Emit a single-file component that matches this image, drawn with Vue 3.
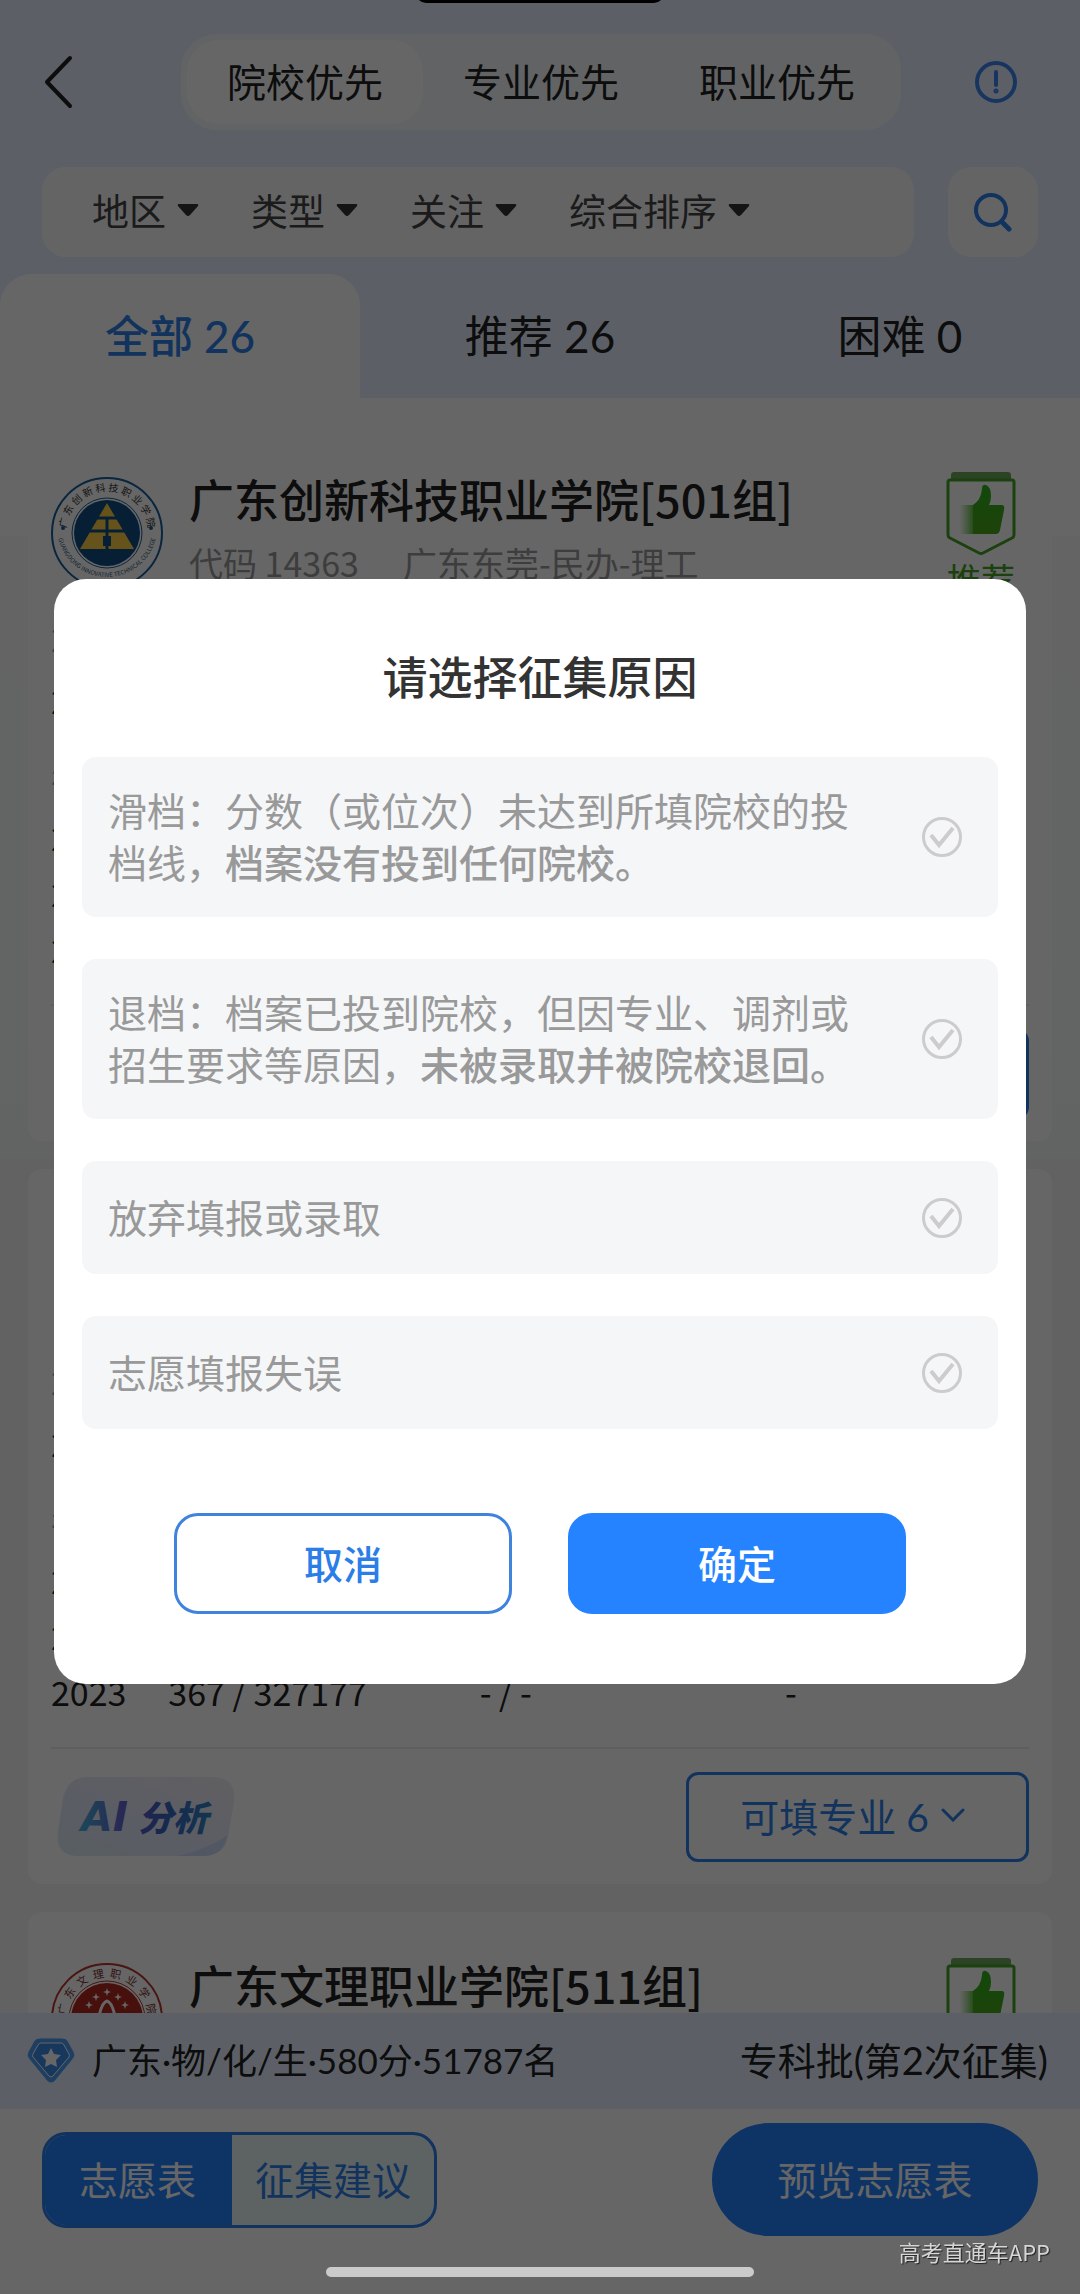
<template>
  <div class="page">
    <header class="top">
      <div class="nav">
        <button type="button" class="icon-btn" aria-label="返回">
          <svg width="32" height="56" viewBox="0 0 32 56" fill="none" stroke="#222" stroke-width="4" stroke-linecap="round" stroke-linejoin="round">
            <path d="M28 4 5 28l23 24" />
          </svg>
        </button>
        <div class="modes">
          <button
            v-for="mode in modes"
            :key="mode"
            type="button"
            class="mode"
            :class="{ active: mode === currentMode }"
            @click="currentMode = mode"
          >{{ mode }}</button>
        </div>
        <button type="button" class="icon-btn" aria-label="说明">
          <svg width="44" height="44" viewBox="0 0 44 44" fill="none" stroke="#3a86ee" stroke-width="4" stroke-linecap="round">
            <circle cx="22" cy="22" r="19" />
            <path d="M22 12v13" />
            <circle cx="22" cy="31" r="1" stroke-width="3" />
          </svg>
        </button>
      </div>

      <div class="filters">
        <div class="filter-box">
          <button v-for="f in filters" :key="f" type="button" class="filter">
            {{ f }}
            <svg width="22" height="12" viewBox="0 0 22 12" fill="#333">
              <path d="M2 0h18q2 0 1 2l-8 9q-2 2-4 0L1 2Q0 0 2 0z" />
            </svg>
          </button>
        </div>
        <button type="button" class="search" aria-label="搜索">
          <svg width="40" height="40" viewBox="0 0 40 40" fill="none" stroke="#2e7fe8" stroke-width="4" stroke-linecap="round">
            <circle cx="18" cy="18" r="15" />
            <path d="m29 30 7 7" stroke-width="5" />
          </svg>
        </button>
      </div>

      <nav class="tabs">
        <button
          v-for="tab in tabs"
          :key="tab.name"
          type="button"
          class="tab"
          :class="{ active: tab.name === currentTab }"
          @click="currentTab = tab.name"
        >{{ tab.name }} {{ tab.count }}</button>
      </nav>
    </header>

    <main class="list">
      <article v-for="school in schools" :key="school.name" class="card">
        <div class="card-head">
          <svg v-if="school.logo === 'blue'" class="logo" viewBox="0 0 112 112">
            <defs>
              <path id="blue-top" d="M17 68A41 41 0 1 1 95 68" />
              <path id="blue-bottom" d="M6 50A50 50 0 1 0 106 50" />
            </defs>
            <circle cx="56" cy="56" r="55" fill="#fff" stroke="#195f9b" stroke-width="2" />
            <circle cx="56" cy="56" r="35" fill="none" stroke="#195f9b" stroke-width="1" />
            <circle cx="56" cy="56" r="33" fill="#0f4f82" />
            <text class="ring-text" font-size="10" fill="#333"><textPath href="#blue-top" startOffset="50%" text-anchor="middle">广 东 创 新 科 技 职 业 学 院</textPath></text>
            <text class="ring-text" font-size="6" fill="#2f5878"><textPath href="#blue-bottom" startOffset="50%" text-anchor="middle">GUANGDONG INNOVATIVE TECHNICAL COLLEGE</textPath></text>
            <path d="M56 26 83 72H29z" fill="#fdd044" />
            <path d="M40 41h32M36 54h40" stroke="#0f4f82" stroke-width="3" />
            <path d="M56 41v31" stroke="#0f4f82" stroke-width="3" />
            <path d="M52 59h8v10h-8z" fill="#0f4f82" />
            <circle cx="12" cy="51" r="2" fill="#195f9b" />
            <circle cx="100" cy="51" r="2" fill="#195f9b" />
          </svg>
          <svg v-else-if="school.logo === 'red'" class="logo" viewBox="0 0 112 112">
            <defs>
              <path id="red-top" d="M17 68A41 41 0 1 1 95 68" />
            </defs>
            <circle cx="56" cy="56" r="55" fill="#fff" stroke="#b9362d" stroke-width="2" />
            <circle cx="56" cy="56" r="38" fill="none" stroke="#b9362d" stroke-width="1" />
            <circle cx="56" cy="56" r="36" fill="#b5281f" />
            <text class="ring-text" font-size="11" fill="#7d302b"><textPath href="#red-top" startOffset="50%" text-anchor="middle">广 &nbsp;东 &nbsp;文 &nbsp;理 &nbsp;职 &nbsp;业 &nbsp;学 &nbsp;院</textPath></text>
            <g fill="#fff">
              <path v-for="s in stars" :key="s" :d="`M${s}m0-4l1 3 3 1-3 1-1 3-1-3-3-1 3-1z`" />
            </g>
            <path d="M46 66Q49 40 56 38q7 2 10 28" fill="none" stroke="#fff" stroke-width="3" />
          </svg>
          <div v-else class="logo"></div>

          <div class="head-text">
            <h2>{{ school.name }}</h2>
            <p><span>{{ school.code }}</span><span>{{ school.place }}</span></p>
          </div>

          <div v-if="school.logo" class="badge">
            <svg width="70" height="84" viewBox="0 0 70 84">
              <defs>
                <linearGradient id="thumb-fade" x1="0" x2="1">
                  <stop offset="0" stop-color="#41b51c" stop-opacity="0" />
                  <stop offset="1" stop-color="#41b51c" stop-opacity=".8" />
                </linearGradient>
                <linearGradient id="thumb-fill" x1="0" y1="0" x2="0" y2="1">
                  <stop offset="0" stop-color="#2fb51c" />
                  <stop offset="1" stop-color="#4ba61a" />
                </linearGradient>
              </defs>
              <path d="M5 8V4q0-3 3-3h54q3 0 3 3v4z" fill="#72a860" />
              <path d="M4 9h62q2 0 2 2v53q0 2-2 3L37 82q-2 1-4 0L4 67q-2-1-2-3V11q0-2 2-2z" fill="#fff" stroke="#42a325" stroke-width="3" />
              <path d="M14 34h13v29H14z" fill="url(#thumb-fade)" />
              <path d="M27 63V34q8-5 9-16 0-5 4-4 5 2 5 11 0 5-2 9h13q3 0 2 5l-4 20q-1 4-4 4z" fill="url(#thumb-fill)" />
            </svg>
            <span>推荐</span>
          </div>
        </div>

        <p class="note muted">2025</p>
        <p class="note">2025</p>

        <table class="scores">
          <tbody>
            <tr v-for="(row, i) in school.rows" :key="i" :class="{ head: i === 0 }">
              <td v-for="(cell, j) in row" :key="j">{{ cell }}</td>
            </tr>
          </tbody>
        </table>

        <div class="card-foot">
          <button type="button" class="icon-btn" aria-label="AI分析">
            <svg width="178" height="80" viewBox="0 0 178 80">
              <defs>
                <linearGradient id="ai-bg" x1="0" y1="1" x2="1" y2="0">
                  <stop offset="0" stop-color="#dcebf0" />
                  <stop offset=".35" stop-color="#e2e8fb" />
                  <stop offset="1" stop-color="#f0eef5" />
                </linearGradient>
                <linearGradient id="ai-text" x1="0" x2="1">
                  <stop offset="0" stop-color="#45b6e0" />
                  <stop offset=".38" stop-color="#6a59cf" />
                  <stop offset=".62" stop-color="#3b63c4" />
                  <stop offset="1" stop-color="#2f86c6" />
                </linearGradient>
              </defs>
              <path d="M29 0h126q25 0 22 25l-6 35q-4 19-25 19H20Q-2 78 1 54L6 22Q10 1 29 0z" fill="url(#ai-bg)" />
              <path d="M121 79q32-8 49-21-3 21-24 21z" fill="#ccdcf8" />
              <text y="54" class="ai-text" fill="url(#ai-text)"><tspan x="24" font-size="41">AI</tspan><tspan x="81" font-size="35">分析</tspan></text>
            </svg>
          </button>
          <button type="button" class="majors">
            可填专业 6
            <svg width="24" height="14" viewBox="0 0 24 14" fill="none" stroke="#2e7fe8" stroke-width="3" stroke-linecap="round">
              <path d="m2 2 10 10L22 2" />
            </svg>
          </button>
        </div>
      </article>
    </main>

    <footer class="dock">
      <div class="status">
        <svg width="50" height="48" viewBox="0 0 50 48">
          <path d="M14 1h22q4 0 6 3l6 11q2 4-1 7L29 44q-4 4-8 0L3 22q-3-3-1-7L8 4q2-3 6-3z" fill="#4c9bf5" stroke="#dcecff" stroke-width="1" />
          <path d="M15 6h20q2 0 3 2l5 9q1 2 0 3L27 39q-2 2-4 0L7 20q-1-1 0-3l5-9q1-2 3-2z" fill="#3d8be8" stroke="#fff" stroke-width="1" />
          <path d="m25 11 3 6 7 1-5 5 1 7-6-3-6 3 1-7-5-5 7-1z" fill="#fff" />
        </svg>
        <span class="score">广东·物/化/生·580分·51787名</span>
        <span class="batch">专科批(第2次征集)</span>
      </div>
      <div class="actions">
        <div class="switch">
          <button type="button" class="on">志愿表</button>
          <button type="button">征集建议</button>
        </div>
        <button type="button" class="preview">预览志愿表</button>
      </div>
    </footer>

    <div class="overlay">
      <form class="modal" role="dialog" aria-labelledby="modal-title" @submit.prevent>
        <h3 id="modal-title">请选择征集原因</h3>
        <div class="options">
          <label v-for="reason in reasons" :key="reason.id" class="option">
            <span>{{ reason.text }}<b v-if="reason.strong">{{ reason.strong }}</b></span>
            <span class="radio">
              <input v-model="selected" type="radio" name="reason" :value="reason.id" />
              <svg viewBox="0 0 40 40" fill="none" stroke="currentColor" stroke-width="4">
                <path d="m9 18 8 10 14-17" />
              </svg>
            </span>
          </label>
        </div>
        <div class="modal-actions">
          <button type="button" class="btn">取消</button>
          <button type="submit" class="btn btn-primary">确定</button>
        </div>
      </form>
    </div>

    <div class="notch"></div>
    <div class="home-bar"></div>
    <span class="watermark">高考直通车APP</span>
  </div>
</template>

<script setup>
import { ref } from 'vue'

const modes = ['院校优先', '专业优先', '职业优先']
const currentMode = ref('院校优先')

const filters = ['地区', '类型', '关注', '综合排序']

const tabs = [
  { name: '全部', count: 26 },
  { name: '推荐', count: 26 },
  { name: '困难', count: 0 }
]
const currentTab = ref('全部')

const rows = [
  ['年份', '', '', ''],
  ['2025', '', '', ''],
  ['2024', '', '', ''],
  ['2023', '367 / 327177', '- / -', '-']
]

const schools = [
  {
    name: '广东创新科技职业学院[501组]',
    code: '代码 14363',
    place: '广东东莞-民办-理工',
    logo: 'blue',
    rows
  },
  { name: '', code: '', place: '', logo: '', rows },
  { name: '广东文理职业学院[511组]', code: '', place: '', logo: 'red', rows }
]

// centres of the sparkles on the red emblem
const stars = ['56 29', '45 34', '67 34', '38 42', '74 42']

const reasons = [
  { id: 1, text: '滑档：分数（或位次）未达到所填院校的投档线，', strong: '档案没有投到任何院校。' },
  { id: 2, text: '退档：档案已投到院校，但因专业、调剂或招生要求等原因，', strong: '未被录取并被院校退回。' },
  { id: 3, text: '放弃填报或录取' },
  { id: 4, text: '志愿填报失误' }
]
const selected = ref(null)
</script>

<style>
body {
  margin: 0;
}
</style>

<style scoped>
.page {
  display: flex;
  flex-direction: column;
  height: 100vh;
  overflow: hidden;
  background: #fff;
  color: #222;
  font-family: Lato, "Noto Sans CJK SC", sans-serif;
  font-size: 39px;
}
.page * {
  box-sizing: border-box;
}
button {
  padding: 0 0 4px;
  border: none;
  background: none;
  color: inherit;
  font: inherit;
  white-space: nowrap;
}
svg {
  display: block;
  flex: none;
}
h2,
h3,
p {
  margin: 0;
}

/* top area */
.top {
  background: #e6f0ff;
}
.nav {
  display: flex;
  align-items: center;
  justify-content: space-between;
  padding: 34px 62px 0 42px;
}
.icon-btn {
  display: flex;
  padding: 0;
}
.modes {
  display: flex;
  flex: 0 1 720px;
  margin-left: 34px;
  padding: 6px;
  border-radius: 36px;
  background: #f6f8fb;
}
.mode {
  flex: 1;
  height: 84px;
  border-radius: 32px;
}
.mode.active {
  background: #fff;
}
.filters {
  display: flex;
  gap: 34px;
  padding: 37px 42px 17px;
}
.filter-box {
  display: flex;
  flex: 1;
  gap: 52px;
  height: 90px;
  padding: 0 50px;
  border-radius: 24px;
  background: #fafbfd;
}
.filter {
  display: flex;
  align-items: center;
  gap: 11px;
  color: #444;
  font-size: 37px;
}
.search {
  display: flex;
  align-items: center;
  justify-content: center;
  width: 90px;
  padding: 0;
  border-radius: 24px;
  background: #fafbfd;
}
.tabs {
  display: grid;
  grid-template-columns: repeat(3, 1fr);
}
.tab {
  height: 124px;
  font-size: 44px;
}
.tab.active {
  border-radius: 32px 32px 0 0;
  background: #fff;
  color: #2e7fe8;
  font-weight: 500;
}

/* school cards */
.list {
  display: flex;
  flex: 1;
  flex-direction: column;
  gap: 28px;
  min-height: 0;
  padding: 28px 28px 0;
  overflow: hidden;
  background: linear-gradient(#fff 138px, #f9fbfb 138px, #f6f9f9 760px, #f4f4f4 760px);
  font-family: "Noto Sans CJK SC", sans-serif;
}
.card {
  flex: none;
  padding: 45px 23px 22px;
  border-radius: 14px;
  background: #fff;
}
.card-head {
  display: flex;
  height: 136px;
}
.logo {
  width: 112px;
  height: 112px;
  margin-top: 6px;
}
.ring-text {
  font-family: "Noto Sans CJK SC", sans-serif;
}
.head-text {
  flex: 1;
  margin-left: 26px;
}
.head-text h2 {
  font-size: 45px;
  font-weight: 500;
  line-height: 56px;
}
.head-text p {
  display: flex;
  gap: 44px;
  margin-top: 12px;
  color: #999;
  font-size: 34px;
  line-height: 48px;
}
.badge {
  display: flex;
  flex-direction: column;
  align-items: center;
  margin-right: 13px;
  color: #42a325;
  font-size: 34px;
  line-height: 48px;
}
.note {
  font-size: 34px;
  line-height: 62px;
}
.note.muted {
  color: #999;
}
.scores {
  width: 100%;
  margin-top: 12px;
  border-collapse: collapse;
  table-layout: fixed;
  font-size: 34px;
  line-height: 56px;
}
.scores td {
  height: 56px;
  padding: 0;
  white-space: nowrap;
}
.scores .head td {
  height: 66px;
  color: #999;
}
.scores td:nth-child(1) {
  width: 12%;
}
.scores td:nth-child(2) {
  width: 25%;
}
.scores td:nth-child(3) {
  width: 19%;
  text-align: center;
}
.scores td:nth-child(4) {
  padding-right: 46px;
  text-align: center;
}
.card-foot {
  display: flex;
  align-items: center;
  justify-content: space-between;
  margin-top: 27px;
  padding: 23px 0 0 6px;
  border-top: 2px solid #ececec;
}
.ai-text {
  font-family: "DejaVu Sans", "Noto Sans CJK SC", sans-serif;
  font-style: italic;
  font-weight: 900;
}
.majors {
  display: flex;
  align-items: center;
  justify-content: center;
  gap: 12px;
  width: 343px;
  height: 90px;
  padding-right: 10px;
  border: 3px solid #2e7fe8;
  border-radius: 12px;
  color: #2e7fe8;
  font-family: Lato, "Noto Sans CJK SC", sans-serif;
}

/* bottom dock */
.status {
  display: flex;
  align-items: center;
  height: 96px;
  padding: 0 32px 0 26px;
  background: #e6f0ff;
}
.status span {
  padding-bottom: 6px;
}
.score {
  margin-left: 16px;
  font-size: 35px;
}
.batch {
  margin-left: auto;
  font-size: 38px;
}
.actions {
  display: flex;
  align-items: center;
  justify-content: space-between;
  padding: 14px 42px 58px;
  background: #fff;
}
.switch {
  display: flex;
  height: 96px;
  overflow: hidden;
  border: 3px solid #2e7fe8;
  border-radius: 24px;
  background: #e9f5f8;
  color: #2e7fe8;
}
.switch button {
  padding: 0 23px 4px;
}
.switch .on {
  padding: 0 36px 4px 34px;
  background: #2583ff;
  color: #fff;
}
.preview {
  width: 326px;
  height: 113px;
  border-radius: 57px;
  background: #2583ff;
  color: #fff;
}

/* reason dialog */
.overlay {
  position: fixed;
  inset: 0;
  display: flex;
  align-items: center;
  justify-content: center;
  padding: 0 54px 31px;
  background: rgba(0, 0, 0, 0.6);
}
.modal {
  width: 100%;
  padding: 67px 28px 70px;
  border-radius: 32px;
  background: #fff;
}
.modal h3 {
  color: #333;
  font-size: 45px;
  font-weight: 500;
  line-height: 64px;
  text-align: center;
}
.options {
  display: flex;
  flex-direction: column;
  gap: 42px;
  margin-top: 47px;
}
.option {
  display: flex;
  align-items: center;
  justify-content: space-between;
  gap: 60px;
  min-height: 113px;
  padding: 28px 36px 28px 26px;
  border-radius: 14px;
  background: #f4f6f8;
  color: #999;
  line-height: 52px;
}
.option b {
  font-weight: 500;
}
.radio {
  display: grid;
  flex: none;
  width: 40px;
  height: 40px;
  color: #ccc;
}
.radio > * {
  grid-area: 1 / 1;
}
.radio input {
  width: 40px;
  height: 40px;
  margin: 0;
  border: 3px solid currentColor;
  border-radius: 50%;
  color: inherit;
  appearance: none;
}
.radio svg {
  pointer-events: none;
}
.radio:has(input:checked) {
  color: #2583ff;
}
.modal-actions {
  display: flex;
  justify-content: center;
  gap: 56px;
  margin-top: 84px;
}
.btn {
  width: 338px;
  height: 101px;
  border: 3px solid #3f83de;
  border-radius: 24px;
  color: #2b7ee8;
  font-weight: 500;
}
.btn-primary {
  border-color: #2583ff;
  background: #2583ff;
  color: #fff;
}

/* device chrome over everything */
.notch {
  position: fixed;
  top: -17px;
  left: 50%;
  width: 248px;
  height: 20px;
  border-radius: 20px;
  background: #000;
  transform: translateX(-50%);
}
.home-bar {
  position: fixed;
  bottom: 17px;
  left: 50%;
  width: 428px;
  height: 10px;
  border-radius: 5px;
  background: #cbcbcb;
  transform: translateX(-50%);
}
.watermark {
  position: fixed;
  right: 30px;
  bottom: 27px;
  color: #d6d6d6;
  font-family: "Noto Sans CJK SC", sans-serif;
  font-size: 22px;
  line-height: 32px;
  text-shadow: 1px 1px 1px #222;
}
</style>
